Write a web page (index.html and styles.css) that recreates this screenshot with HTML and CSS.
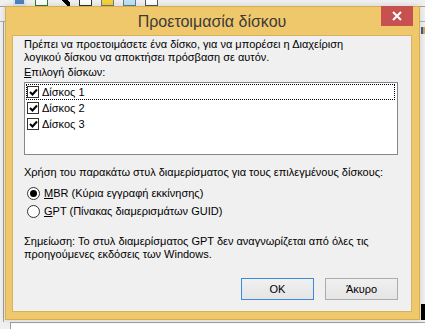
FILE: index.html
```html
<!DOCTYPE html>
<html lang="el">
<head>
    <meta charset="UTF-8">
    <meta name="viewport" content="width=device-width, initial-scale=1.0">
    <title>Προετοιμασία δίσκου</title>
    <link rel="stylesheet" href="styles.css">
</head>
<body>

<!-- Disk Management window behind the dialog -->
<div class="app">
    <div class="toolbar">
        <span class="tb tb-blue"></span>
        <span class="tb tb-green"></span>
        <span class="tb tb-x"></span>
        <span class="tb tb-doc"></span>
        <span class="tb tb-yellow"></span>
        <span class="tb tb-cyan"></span>
        <span class="tb tb-grid"></span>
    </div>
    <div class="menubar"></div>
    <div class="workspace">
        <div class="side"></div>
        <div class="pane">
            <span class="pane-icon"></span>
            <span class="pane-bar"></span>
        </div>
    </div>
    <div class="bottom"></div>
</div>

<div class="dialog">
    <div class="titlebar">
        <span class="title">Προετοιμασία δίσκου</span>
        <button class="close" title="Κλείσιμο">
            <svg width="10" height="10" viewBox="0 0 10 10">
                <path d="M1 1 L9 9 M9 1 L1 9" stroke="#fff" stroke-width="2"/>
            </svg>
        </button>
    </div>

    <div class="client">
        <p class="intro">Πρέπει να προετοιμάσετε ένα δίσκο, για να μπορέσει η Διαχείριση<br>λογικού δίσκου να αποκτήσει πρόσβαση σε αυτόν.</p>

        <div class="label"><u>Ε</u>πιλογή δίσκων:</div>
        <ul class="disk-list">
            <li class="disk focused">
                <span class="check"><svg width="9" height="9" viewBox="0 0 9 9"><path d="M1 4 L3.5 6.5 L8 1.5" fill="none" stroke="#000" stroke-width="2"/></svg></span>
                <span>Δίσκος 1</span>
            </li>
            <li class="disk">
                <span class="check"><svg width="9" height="9" viewBox="0 0 9 9"><path d="M1 4 L3.5 6.5 L8 1.5" fill="none" stroke="#000" stroke-width="2"/></svg></span>
                <span>Δίσκος 2</span>
            </li>
            <li class="disk">
                <span class="check"><svg width="9" height="9" viewBox="0 0 9 9"><path d="M1 4 L3.5 6.5 L8 1.5" fill="none" stroke="#000" stroke-width="2"/></svg></span>
                <span>Δίσκος 3</span>
            </li>
        </ul>

        <p class="label style-label">Χρήση του παρακάτω στυλ διαμερίσματος για τους επιλεγμένους δίσκους:</p>
        <div class="radio-group">
            <div class="radio-row"><span class="radio checked"></span><span><u>M</u>BR (Κύρια εγγραφή εκκίνησης)</span></div>
            <div class="radio-row"><span class="radio"></span><span><u>G</u>PT (Πίνακας διαμερισμάτων GUID)</span></div>
        </div>

        <p class="note">Σημείωση: Το στυλ διαμερίσματος GPT δεν αναγνωρίζεται από όλες τις<br>προηγούμενες εκδόσεις των Windows.</p>

        <div class="buttons">
            <button class="btn btn-default">OK</button>
            <button class="btn">Άκυρο</button>
        </div>
    </div>
</div>

</body>
</html>
```

FILE: styles.css
```css
html, body {
    margin: 0;
    padding: 0;
}
body {
    width: 425px;
    height: 329px;
    overflow: hidden;
    background-color: #f0f0f0;
    font-family: "Liberation Sans", Arial, sans-serif;
    font-size: 11px;
    color: #000;
    position: relative;
}

/* background window */
.app {
    display: flex;
    flex-direction: column;
    height: 329px;
}
.toolbar {
    height: 6px;
    display: flex;
    align-items: flex-end;
    gap: 9px;
    padding-left: 13px;
    overflow: hidden;
    border-bottom: 1px solid #a0a0a0;
}
.tb {
    width: 13px;
    height: 14px;
    flex: none;
    box-sizing: border-box;
}
.tb-blue { background: #4f81bd; border: 2px solid #dbe5f1; }
.tb-green { background: #fff; border: 1px solid #2f7f2f; }
.tb-x { background: linear-gradient(45deg, transparent 40%, #000 40%, #000 60%, transparent 60%); }
.tb-doc { background: #fff; border: 1px solid #333; }
.tb-yellow { background: #f3d23c; border: 1px solid #777; }
.tb-cyan { background: #bfe3f3; border: 1px solid #5a7fa0; }
.tb-grid { background: #fff; border: 1px solid #555; }
.menubar {
    height: 14px;
    border-bottom: 1px solid #b0b0b0;
}
.workspace {
    flex: 1;
    display: flex;
}
.side {
    width: 3px;
    border-right: 1px solid #a0a0a0;
}
.pane {
    flex: 1;
    display: flex;
    flex-direction: column;
    align-items: flex-end;
}
.pane-icon {
    margin-top: 5px;
    width: 4px;
    height: 7px;
    background: linear-gradient(90deg, #2a5db0 50%, #e8a040 50%);
}
.pane-bar {
    margin-top: auto;
    margin-bottom: 2px;
    width: 4px;
    height: 16px;
    background: #000;
}
.bottom {
    height: 6px;
    margin-left: 10px;
    background: #fff;
    border-top: 1px solid #a0a0a0;
    border-left: 1px solid #a0a0a0;
}

/* dialog */
.dialog {
    position: absolute;
    left: 5px;
    top: 6px;
    width: 415px;
    height: 314px;
    box-sizing: border-box;
    background-color: #f0c86c;
    border: 1px solid #d8ad50;
    display: flex;
    flex-direction: column;
    padding: 0 7px 7px 6px;
    box-shadow: 0 0 6px rgba(0,0,0,0.15);
}
.titlebar {
    height: 28px;
    display: flex;
    justify-content: center;
    align-items: center;
    position: relative;
}
.title {
    font-size: 16px;
    color: #3b3b3b;
    padding-top: 2px;
}
.close {
    position: absolute;
    top: -1px;
    right: -1px;
    width: 32px;
    height: 20px;
    border: none;
    padding: 0;
    background-color: #c75050;
    display: flex;
    align-items: center;
    justify-content: center;
}
.client {
    flex: 1;
    background-color: #f0f0f0;
    border: 1px solid #d4b164;
    padding: 2px 13px 11px 11px;
    display: flex;
    flex-direction: column;
}
.intro, .note, .label {
    margin: 0;
    line-height: 13px;
}
.label {
    margin-top: 2px;
}
.disk-list {
    list-style: none;
    margin: 3px 0 0 0;
    padding: 1px 0 0 1px;
    height: 70px;
    background: #fff;
    border: 1px solid #828790;
}
.disk {
    height: 16px;
    display: flex;
    align-items: center;
    gap: 3px;
    padding-left: 1px;
    box-sizing: border-box;
}
.disk.focused {
    outline: 1px dotted #000;
    outline-offset: -1px;
    margin-right: 2px;
}
.check {
    width: 12px;
    height: 12px;
    box-sizing: border-box;
    border: 1px solid #333;
    background: #fff;
    display: flex;
    align-items: center;
    justify-content: center;
    flex: none;
}
.style-label {
    margin-top: 11px;
}
.radio-group {
    margin-top: 5px;
}
.radio-row {
    height: 18px;
    display: flex;
    align-items: center;
    gap: 4px;
    padding-left: 3px;
}
.radio {
    width: 13px;
    height: 13px;
    box-sizing: border-box;
    border: 1px solid #333;
    border-radius: 50%;
    background: #fff;
    display: flex;
    align-items: center;
    justify-content: center;
    flex: none;
}
.radio.checked::after {
    content: "";
    width: 7px;
    height: 7px;
    border-radius: 50%;
    background: #000;
}
.note {
    margin-top: 15px;
}
.buttons {
    margin-top: auto;
    display: flex;
    justify-content: flex-end;
    gap: 11px;
}
.btn {
    width: 73px;
    height: 22px;
    font-family: "Liberation Sans", Arial, sans-serif;
    font-size: 11px;
    color: #000;
    background: linear-gradient(#f0f0f0, #e5e5e5);
    border: 1px solid #acacac;
    padding: 0;
}
.btn-default {
    border-color: #3c8ad8;
}
```
